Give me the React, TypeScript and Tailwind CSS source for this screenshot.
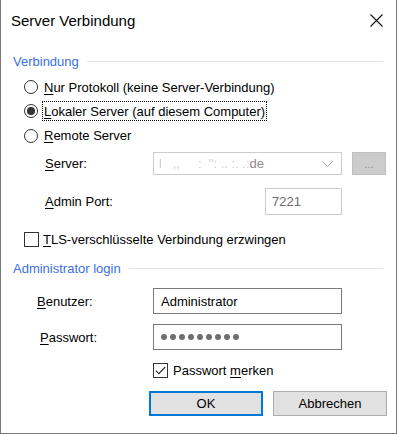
import React from 'react';

function Radio({ checked }: { checked?: boolean }) {
  return (
    <span className="flex h-[14px] w-[14px] shrink-0 items-center justify-center rounded-full border border-[#333] bg-white">
      {checked ? <span className="h-[8px] w-[8px] rounded-full bg-[#333]" /> : null}
    </span>
  );
}

function Check({ checked }: { checked?: boolean }) {
  return (
    <span className="flex h-[15px] w-[15px] shrink-0 items-center justify-center border border-[#333] bg-white">
      {checked ? (
        <svg width="11" height="9" viewBox="0 0 11 9" fill="none">
          <path d="M0.8 4.6 L3.8 7.6 L10.2 1" stroke="#333" strokeWidth="1.2" />
        </svg>
      ) : null}
    </span>
  );
}

function GroupHeader({ title }: { title: string }) {
  return (
    <div className="flex h-[16px] items-center pl-[12px] pr-[13px]">
      <span className="text-[#3b6fe2]">{title}</span>
      <span className="ml-[8px] h-px flex-1 bg-[#dde3ea]" />
    </div>
  );
}

export default function App() {
  return (
    <div className="min-h-screen bg-white" style={{ fontFamily: '"Liberation Sans", Arial, sans-serif' }}>
      <div className="flex h-[434px] w-[397px] flex-col border-x border-b border-[#7a7a7a] text-[13px] leading-none text-black">
        {/* title */}
        <div className="flex h-[40px] shrink-0 items-center justify-between pl-[10px] pr-[13px]">
          <span className="text-[15px]">Server Verbindung</span>
          <svg width="13" height="13" viewBox="0 0 13 13">
            <path d="M0.5 0.5 L12.5 12.5 M12.5 0.5 L0.5 12.5" stroke="#111" strokeWidth="1.1" />
          </svg>
        </div>

        <div className="mt-[13px]">
          <GroupHeader title="Verbindung" />
        </div>

        <div className="mt-[6px] flex h-[24px] items-center pl-[23px]">
          <Radio />
          <span className="ml-[5px] px-px">
            <u className="underline-offset-2">N</u>ur Protokoll (keine Server-Verbindung)
          </span>
        </div>
        <div className="flex h-[24px] items-center pl-[23px]">
          <Radio checked />
          <span className="ml-[4px] flex h-[20px] items-center border border-dotted border-black px-px">
            <span>
              <u className="underline-offset-2">L</u>okaler Server (auf diesem Computer)
            </span>
          </span>
        </div>
        <div className="flex h-[25px] items-center pl-[23px]">
          <Radio />
          <span className="ml-[5px] px-px">
            <u className="underline-offset-2">R</u>emote Server
          </span>
        </div>

        {/* server */}
        <div className="mt-[4px] flex h-[23px] items-center">
          <span className="w-[152px] shrink-0 pl-[44px]">
            <u className="underline-offset-2">S</u>erver:
          </span>
          <div className="flex h-[23px] w-[189px] items-center justify-between border border-[#cccccc] pl-[5px] pr-[8px]">
            <span>
              <span className="text-[#cfcfcf] blur-[0.6px]">l&nbsp;&nbsp;&nbsp;,,&nbsp;&nbsp;&nbsp;&nbsp;&nbsp;:&nbsp;&nbsp;":&nbsp;..&nbsp;:.&nbsp;.:</span>
              <span className="text-[#8c8c8c]">de</span>
            </span>
            <svg width="11" height="6" viewBox="0 0 11 6" fill="none">
              <path d="M0.5 0.5 L5.5 5.5 L10.5 0.5" stroke="#a8a8a8" strokeWidth="1" />
            </svg>
          </div>
          <div className="ml-[10px] flex h-[23px] w-[34px] items-end justify-center border border-[#bfbfbf] bg-[#cccccc] pb-[4px] text-[11px] text-[#8a8a8a]">
            ...
          </div>
        </div>

        {/* port */}
        <div className="mt-[13px] flex h-[27px] items-center">
          <span className="w-[264px] shrink-0 pl-[44px]">
            <u className="underline-offset-2">A</u>dmin Port:
          </span>
          <div className="flex h-[27px] w-[77px] items-center border border-[#cccccc] pl-[6px] text-[#6d6d6d]">7221</div>
        </div>

        {/* TLS */}
        <div className="mt-[14px] flex h-[20px] items-center pl-[23px]">
          <Check />
          <span className="ml-[4px]">
            <u className="underline-offset-2">T</u>LS-verschlüsselte Verbindung erzwingen
          </span>
        </div>

        <div className="mt-[11px]">
          <GroupHeader title="Administrator login" />
        </div>

        {/* user */}
        <div className="mt-[12px] flex h-[26px] items-center">
          <span className="w-[152px] shrink-0 pl-[36px]">
            <u className="underline-offset-2">B</u>enutzer:
          </span>
          <div className="flex h-[26px] w-[189px] items-center border border-[#7a7a7a] pl-[7px]">Administrator</div>
        </div>

        <div className="mt-[10px] flex h-[26px] items-center">
          <span className="w-[152px] shrink-0 pl-[39px]">
            <u className="underline-offset-2">P</u>asswort:
          </span>
          <div className="flex h-[26px] w-[189px] items-center gap-[3px] border border-[#7a7a7a] pl-[7px]">
            {[0, 1, 2, 3, 4, 5, 6, 7, 8].map((i) => (
              <span key={i} className="h-[6px] w-[6px] rounded-full bg-[#6e6e6e]" />
            ))}
          </div>
        </div>

        <div className="mt-[11px] flex h-[18px] items-center pl-[152px]">
          <Check checked />
          <span className="ml-[5px]">
            Passwort <u className="underline-offset-2">m</u>erken
          </span>
        </div>

        <div className="mt-[12px] flex h-[25px] pl-[148px]">
          <button type="button" className="flex h-[25px] w-[114px] items-center justify-center border-2 border-[#0078d7] bg-[#e1e1e1]">
            OK
          </button>
          <button type="button" className="ml-[10px] flex h-[25px] w-[114px] items-center justify-center border border-[#adadad] bg-[#e1e1e1]">
            Abbrechen
          </button>
        </div>
      </div>
    </div>
  );
}
